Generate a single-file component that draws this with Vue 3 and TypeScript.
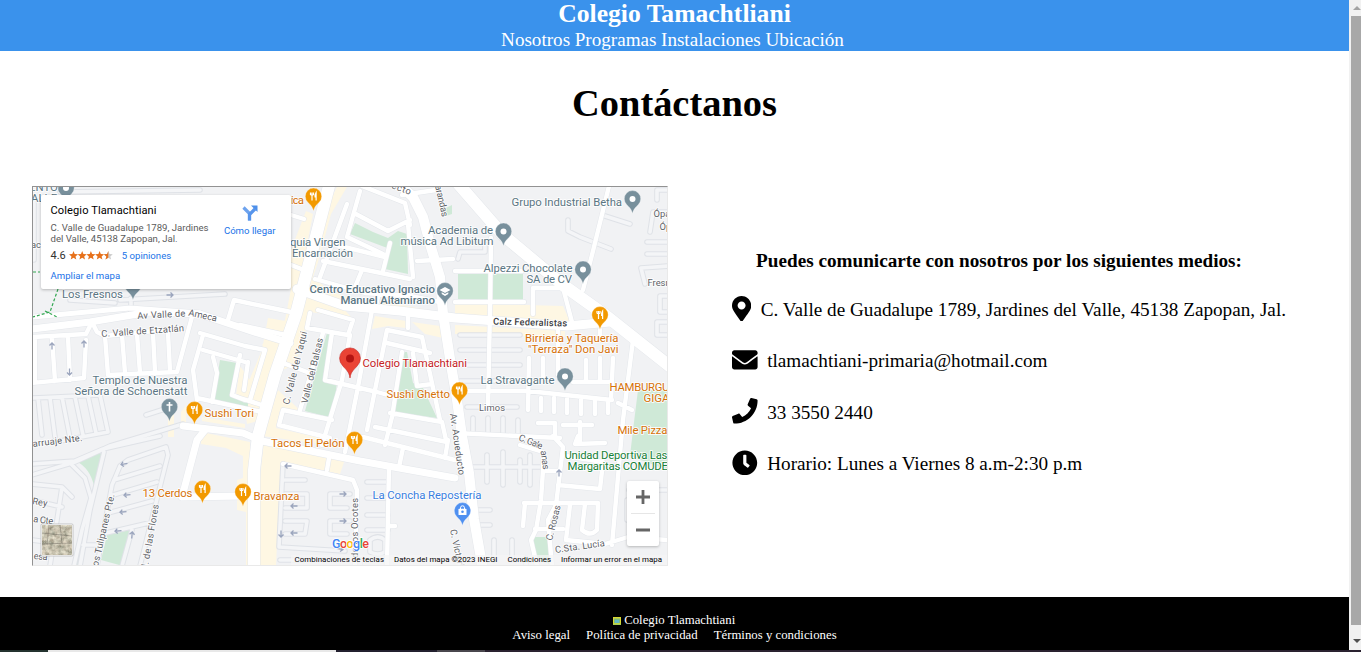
<script setup lang="ts">
interface Label {
  t: string
  x: number
  y: number
  w?: number
  c: string
  r?: number
}
interface Pin {
  x: number
  y: number
  k: 'food' | 'dot' | 'edu' | 'church' | 'shop'
}

const navLinks: string[] = ['Nosotros', 'Programas', 'Instalaciones', 'Ubicación']
const legalLinks: string[] = ['Aviso legal', 'Política de privacidad', 'Términos y condiciones']

const contacts = [
  {
    text: 'C. Valle de Guadalupe 1789, Jardines del Valle, 45138 Zapopan, Jal.',
    w: 384,
    d: 'M172.268 501.67C26.97 291.031 0 269.413 0 192 0 85.961 85.961 0 192 0s192 85.961 192 192c0 77.413-26.97 99.031-172.268 309.67-9.535 13.774-29.93 13.773-39.464 0zM192 272c44.183 0 80-35.817 80-80s-35.817-80-80-80-80 35.817-80 80 35.817 80 80 80z',
  },
  {
    text: 'tlamachtiani-primaria@hotmail.com',
    w: 512,
    d: 'M502.3 190.8c3.9-3.1 9.7-.2 9.7 4.7V400c0 26.5-21.5 48-48 48H48c-26.5 0-48-21.5-48-48V195.6c0-5 5.7-7.8 9.7-4.7 22.4 17.4 52.1 39.5 154.1 113.6 21.1 15.4 56.7 47.8 92.2 47.6 35.7.3 72-32.8 92.3-47.6 102-74.1 131.6-96.3 154-113.7zM256 320c23.2.4 56.6-29.2 73.4-41.4 132.7-96.3 142.8-104.7 173.4-128.7 5.8-4.5 9.2-11.5 9.2-18.9v-19c0-26.5-21.5-48-48-48H48c-26.5 0-48 21.5-48 48v19c0 7.4 3.4 14.3 9.2 18.9 30.6 23.9 40.7 32.4 173.4 128.7 16.8 12.2 50.2 41.8 73.4 41.4z',
  },
  {
    text: '33 3550 2440',
    w: 512,
    d: 'M493.4 24.6l-104-24c-11.3-2.6-22.9 3.3-27.5 13.9l-48 112c-4.2 9.8-1.4 21.3 6.9 28l60.6 49.6c-36 76.7-98.9 140.5-177.2 177.2l-49.6-60.6c-6.8-8.3-18.2-11.1-28-6.9l-112 48C3.9 366.5-2 378.1.6 389.4l24 104C27.1 504.2 36.7 512 48 512c256.1 0 464-207.5 464-464 0-11.2-7.7-20.9-18.6-23.4z',
  },
  {
    text: 'Horario: Lunes a Viernes 8 a.m-2:30 p.m',
    w: 512,
    d: 'M256,8C119,8,8,119,8,256S119,504,256,504,504,393,504,256,393,8,256,8Zm92.49,313h0l-20,25a16,16,0,0,1-22.49,2.5h0l-67-49.72a40,40,0,0,1-15-31.23V112a16,16,0,0,1,16-16h32a16,16,0,0,1,16,16V256l58,42.5A16,16,0,0,1,348.49,321Z',
  },
]

const beige: string[] = [
  'M306 211L313 214L300 280L292 312L284 360L262 345L285 320L291 289L291 250Z',
  'M337 187H347L331 214L318 262L313 277L330 291L355 300L362 307L300 288L318 225Z',
  'M303 296L343 308L352 318L310 312L306 330L295 365L280 371Z',
  'M268 318L291 322L280 360L262 420L247 424L243 395L262 350Z',
  'M264 440L345 459L340 474L283 462L278 520L276 566H260V480Z',
  'M201 432L250 442V566H246V512L237 510V480L243 478V456L226 448L201 444Z',
  'M278 390L302 412L280 410L276 428L330 440L328 445L262 436Z',
  'M455 303L563 306L570 322L455 314Z',
  'M455 325L565 331V337L455 334Z',
  'M370 302L440 316V312L375 300Z',
  'M375 316L406 321V328L388 326L372 329ZM412 322L440 326L443 338L425 334Z',
  'M168 411H174V437H168ZM181 412L186 405V424H181ZM202 417L245 424V428L202 421Z',
  'M240 366L250 380L244 398L236 395Z',
]

const greens: string[] = [
  'M220 360L237 363L232 393L243 398V408L213 403Z',
  'M327 333L330 335L323 378L337 383L332 418L305 411Z',
  'M403 352H407L413 383L423 388L437 418L392 412Z',
  'M355 223L373 232L388 238L398 231L407 234L408 274L385 269L390 249L350 234Z',
  'M458 274H523V301L458 299Z',
  'M638 390H668V470L630 456L633 430Z',
  'M533 537H547L552 566L536 556Z',
  'M76 461L104 450L94 486Q90 468 76 461Z',
  'M107 535L130 530L123 566L101 560Z',
  'M240 404L248 400V410H242Z',
  'M444 209L452 205V214L446 216Z',
  'M93 490L88 530L80 566H76L84 530Z',
]

/* Dead ends and private lanes, outlined in grey */
const lanes =
  'M32 475L75 462L110 446L150 434L183 424M32 464L75 461L103 449L160 436M70 463L85 478L91 498L82 530L74 566' +
  'M104 452L90 510L80 566M32 484L62 487L72 497M32 500L62 507M62 487L50 566M83 545H97M32 540L55 543' +
  'M120 466L128 460L166 447L168 455L140 566M120 466L112 485L97 566M114 480L160 466M110 496L157 482M108 513L152 501M106 533L153 522M132 530L122 566' +
  'M32 398L100 395L108 432L60 441M38 398L42 435M50 398L55 437M62 397L70 438M75 397L83 435M88 396L96 433' +
  'M146 415L168 408M605 216L630 224M568 220V231L580 237L611 249M458 259L460 252H485V244' +
  'M460 335H520M460 350H520M460 365H520M460 381H515M467 407H517M473 418V432M488 418V433M503 418V434M518 420V435' +
  'M470 467H540M487 455V482M503 452V485M520 460V482M530 455V485M474 510H490M474 525H490M494 540V560M512 540V560M526 558V566' +
  'M367 482H388M367 498H388M367 515H388M367 530H388M283 464L279 547L345 551M285 480H305M285 494H307V508H285M285 521H307L305 534H285M350 494H330V508H347M350 521H330V534H347' +
  'M370 540V552Q378 556 385 552V540Q378 534 370 540M120 300L225 294M131 298V312M70 300L115 303M34 200V260M60 192L200 190' +
  'M650 232L653 212H668M647 242H668M647 254H668M645 284L641 268L668 266M668 296H660V312H668M668 190H657V200M668 322H657V335H668M360 560V566M280 560H300' +
  'M629 490H668M627 520V500'

const streets =
  'M32 383L84 378L86 340M35 338V382M52 338L55 381M68 337L70 380M32 337L86 334L92 322L97 332L105 336L108 375L177 372L193 313' +
  'M122 335L125 373M137 334L140 373M153 333L155 372M168 333L170 371M105 336L182 328' +
  'M200 333L245 346L265 350L250 400M203 335L193 370L197 400M203 350L245 362M213 357L217 373L212 402M240 355L232 395L245 400M197 398L262 412' +
  'M240 325L290 336M240 398L265 406M248 362L244 390M228 320L234 300L291 312' +
  'M310 313L307 328L348 335L353 320L318 310M283 363L307 372M323 333L300 410M332 333L325 380L377 392L395 397' +
  'M350 335L342 380L322 445M372 310L358 387L345 452M387 330L367 430M387 330L422 337L440 420M387 343L430 353M413 353L417 386L432 384' +
  'M402 352L392 417L385 445M390 413L442 422L446 440M283 410L332 420M283 410L279 425L330 438M375 427L447 442M408 312V328' +
  'M362 186L405 203L410 225M360 191L347 237L383 254M354 213L388 231L410 220M390 243L383 271M408 224L413 277M347 204L320 277' +
  'M336 245L385 257M323 261L410 279M362 270L355 287M315 279L365 293L410 296L440 302M417 261L453 259M380 288L376 306M402 195L436 190' +
  'M491 238L490 314M490 310L488 407M455 271H522M455 302H524M533 290V314M533 288H563L572 322M609 186L593 251L583 290' +
  'M465 391H528L612 400M529 358L528 410M543 358V378M558 325V375M586 360V382M600 358V382M613 358L611 400M573 382H612' +
  'M541 398V411M554 398V412M567 399V413M581 400V414M595 400V414M608 400V413M633 340L623 420L612 545M618 403L632 410' +
  'M455 433L560 438M538 423H555V437M563 425H592M580 422V440M553 436L563 447L556 505L548 520M578 436L575 444L605 443' +
  'M520 445L543 452V470L541 500L536 530L531 540L537 566M558 485L600 489L603 462L566 456M543 471H560M524 503H598L597 530Q590 537 582 530L585 504' +
  'M525 503L523 526M570 505L566 540L605 544L628 537L668 540M535 529H563M548 520L552 566M389 467L387 566M389 526H395' +
  'M403 448L399 467M363 437L455 460M448 440L445 458M283 464L353 480L357 490L355 566M329 458L327 470M291 215L304 219M291 265L304 270M600 330V340'

const mainRoads = [
  { d: 'M329 186L296 314L275 375L258 436L254 470V566', w: 12 },
  { d: 'M455 180L503 235L563 285L605 315L672 368', w: 12 },
  { d: 'M395 180L413 197L423 217L430 244L440 277L443 314L451 365L457 400L462 436L469 473L474 519L483 570', w: 10 },
  { d: 'M297 289L345 306L400 311L455 318L567 326L610 322', w: 9 },
  { d: 'M32 329L90 322L150 312L200 314L248 330L290 343', w: 7 },
  { d: 'M32 317L130 308L200 313', w: 5 },
  { d: 'M183 426L243 433L262 441L360 461L455 478', w: 7 },
  { d: 'M205 430L197 440L182 497L245 496', w: 7 },
]

const arrows = [
  { x: 52, y: 346, r: -90 }, { x: 84, y: 344, r: -90 }, { x: 69.500, y: 372, r: 90 }, { x: 170, y: 295, r: 0 },
  { x: 124, y: 464, r: 170 }, { x: 127, y: 495, r: 175 }, { x: 123, y: 512, r: 175 }, { x: 118, y: 531, r: 175 }, { x: 132, y: 535, r: -85 },
  { x: 288, y: 466, r: 180 }, { x: 294, y: 506, r: 180 }, { x: 294, y: 533, r: 180 }, { x: 281, y: 534, r: 90 },
  { x: 343, y: 494, r: 0 }, { x: 343, y: 521, r: 0 }, { x: 340, y: 549, r: 10 }, { x: 559, y: 473, r: -90 },
]

const labels: Label[] = [
  { t: 'ENTO', x: 29, y: 191, c: 'poi' },
  { t: 'ALLE', x: 31, y: 202, c: 'poi' },
  { t: 'Grupo Industrial Betha', x: 511.5, y: 206, w: 110.500, c: 'poi' },
  { t: 'Academia de', x: 428, y: 234, w: 65, c: 'poi' },
  { t: 'música Ad Libitum', x: 400.5, y: 245, w: 93, c: 'poi' },
  { t: 'Alpezzi Chocolate', x: 483.5, y: 271.5, w: 89, c: 'poi' },
  { t: 'SA de CV', x: 526.5, y: 282.500, w: 45.500, c: 'poi' },
  { t: 'Centro Educativo Ignacio', x: 309.5, y: 293, w: 125.500, c: 'poi med' },
  { t: 'Manuel Altamirano', x: 340.5, y: 304, w: 94.500, c: 'poi med' },
  { t: 'quia Virgen', x: 290, y: 246, w: 55.500, c: 'poi' },
  { t: 'Encarnación', x: 292, y: 257, w: 61, c: 'poi' },
  { t: 'ica', x: 291, y: 204, w: 13, c: 'food' },
  { t: 'Los Fresnos', x: 62, y: 298, w: 61, c: 'poi' },
  { t: 'Birriería y Taquería', x: 525, y: 342, w: 93.500, c: 'food' },
  { t: '"Terraza" Don Javi', x: 528, y: 353, w: 90.500, c: 'food' },
  { t: 'La Stravagante', x: 480.5, y: 384, w: 74, c: 'poi' },
  { t: 'HAMBURGU', x: 609.5, y: 390.5, w: 60, c: 'food' },
  { t: 'GIGA', x: 643.5, y: 402, c: 'food' },
  { t: 'Mile Pizza', x: 617.500, y: 434, w: 50, c: 'food' },
  { t: 'Colegio Tlamachtiani', x: 362.5, y: 366.5, w: 104.500, c: 'place' },
  { t: 'Sushi Ghetto', x: 386.5, y: 398, w: 63.500, c: 'food' },
  { t: 'Tacos El Pelón', x: 271, y: 447, w: 73.500, c: 'food' },
  { t: 'Sushi Tori', x: 204.5, y: 417, w: 49.500, c: 'food' },
  { t: 'Templo de Nuestra', x: 92.5, y: 384, w: 95, c: 'poi' },
  { t: 'Señora de Schoenstatt', x: 74.5, y: 395, w: 113, c: 'poi' },
  { t: '13 Cerdos', x: 142.5, y: 496.5, w: 50, c: 'food' },
  { t: 'Bravanza', x: 253.5, y: 500, w: 46, c: 'food' },
  { t: 'La Concha Repostería', x: 372.5, y: 499, w: 109, c: 'shop' },
  { t: 'Unidad Deportiva Las', x: 564.5, y: 458.5, w: 103, c: 'park' },
  { t: 'Margaritas COMUDE', x: 567.500, y: 470, w: 100.500, c: 'park' },
  { t: 'Calz Federalistas', x: 493, y: 324.5, w: 74, c: 'road dark', r: 1.5 },
  { t: 'Limos', x: 479, y: 411, w: 26, c: 'road' },
  { t: 'Av Valle de', x: 137.500, y: 319, w: 48, c: 'road', r: -3 },
  { t: 'Ameca', x: 188, y: 315.500, w: 29, c: 'road', r: 12 },
  { t: 'C. Valle de Etzatlán', x: 101.5, y: 337, w: 83, c: 'road', r: -4 },
  { t: 'C. Valle del Yaqui', x: 289, y: 405, w: 75, c: 'road', r: -76 },
  { t: 'Valle del Balsas', x: 307.5, y: 404, w: 67, c: 'road', r: -76.500 },
  { t: 'Av. Acueducto', x: 450, y: 414, w: 62, c: 'road', r: 82 },
  { t: 'C. Gale', x: 518, y: 440, w: 25, c: 'road', r: 22 },
  { t: 'anas', x: 540.500, y: 451, w: 19, c: 'road', r: 82 },
  { t: 'C. Rosas', x: 552, y: 541, w: 36, c: 'road', r: -76 },
  { t: 'C.Sta. Lucía', x: 555.5, y: 553, w: 50, c: 'road', r: -8 },
  { t: 'C. Victoria', x: 450, y: 530, c: 'road', r: 78 },
  { t: 'los Tulipanes Pte.', x: 97.5, y: 569, w: 76, c: 'road', r: -77 },
  { t: 'l. de las Flores', x: 148, y: 567, w: 63, c: 'road', r: -80 },
  { t: 'de los Ocotes', x: 358, y: 558, w: 60, c: 'road', r: -90 },
  { t: 'arruaje Nte.', x: 33, y: 447, w: 50, c: 'road', r: -7 },
  { t: 'Rey', x: 32, y: 504, w: 15, c: 'road', r: 10 },
  { t: 'a Ote.', x: 33, y: 522, w: 22, c: 'road', r: 7 },
  { t: 'esa', x: 33.500, y: 559, w: 14, c: 'road', r: 5 },
  { t: 'ac', x: 31, y: 248, c: 'road' },
  { t: 'ecto', x: 391, y: 188, w: 20, c: 'road', r: 20 },
  { t: 'arandas', x: 435, y: 186, w: 32, c: 'road', r: 77 },
  { t: 'Ópalo', x: 653.5, y: 217, c: 'road' },
  { t: 'Óp', x: 659.5, y: 230, c: 'road' },
  { t: 'Fresno', x: 647.5, y: 286, c: 'road' },
]

const pins: Pin[] = [
  { x: 66, y: 188, k: 'dot' }, { x: 133, y: 285.5, k: 'dot' },
  { x: 632.5, y: 199, k: 'dot' }, { x: 503.5, y: 231.5, k: 'dot' }, { x: 583, y: 269.500, k: 'dot' },
  { x: 445, y: 291, k: 'edu' }, { x: 565, y: 376.5, k: 'dot' }, { x: 169.5, y: 407, k: 'church' },
  { x: 313.5, y: 196.5, k: 'food' }, { x: 600, y: 315, k: 'food' }, { x: 459.5, y: 390.5, k: 'food' },
  { x: 194.5, y: 410, k: 'food' }, { x: 354.5, y: 440, k: 'food' }, { x: 202.5, y: 489, k: 'food' },
  { x: 243, y: 492, k: 'food' }, { x: 462.5, y: 511, k: 'shop' },
]
const pinFill: Record<Pin['k'], string> = {
  food: '#f29900', dot: '#78909c', edu: '#78909c', church: '#78909c', shop: '#4f90f0',
}

const star = 'M4.500 0L5.700 3.100L9 3.300L6.500 5.400L7.300 8.600L4.500 6.800L1.700 8.600L2.500 5.400L0 3.300L3.300 3.100Z'
</script>

<template>
  <div class="window">
    <div class="viewport">
      <div class="page">
        <header class="top">
          <h2 class="brand">Colegio Tamachtliani</h2>
          <nav class="nav"><a v-for="l in navLinks" :key="l">{{ l }}</a></nav>
        </header>

        <main class="main">
          <h1 class="title">Contáctanos</h1>
          <div class="columns">
            <div class="map">
              <svg class="canvas" viewBox="33 187 634 378" width="634" height="378">
                <defs>
                  <filter id="ground" x="0" y="0" width="1" height="1">
                    <feTurbulence type="fractalNoise" baseFrequency="0.22" numOctaves="4" seed="8" />
                    <feColorMatrix values="0.8 0 0 0 0.16  0.75 0.1 0 0 0.1  0.65 0.1 0 0 0.04  0 0 0 0 1" />
                  </filter>
                </defs>
                <rect x="32" y="186" width="636" height="380" fill="#f1f2f4" />
                <path v-for="d in beige" :key="d" :d="d" fill="#fef7e3" />
                <path v-for="d in greens" :key="d" :d="d" fill="#cfe9d7" />
                <path class="line" :d="lanes" stroke="#dfe2e7" stroke-width="5.600" />
                <path class="line" :d="lanes" stroke="#f4f5f7" stroke-width="3.600" />
                <path class="line" :d="streets" stroke="#e4e7eb" stroke-width="5.400" />
                <path v-for="m in mainRoads" :key="'e' + m.d" class="line" :d="m.d" stroke="#e4e7eb" :stroke-width="m.w + 1" />
                <path class="line" :d="streets" stroke="#fff" stroke-width="4.400" />
                <path v-for="m in mainRoads" :key="m.d" class="line" :d="m.d" stroke="#fff" :stroke-width="m.w" />
                <path d="M33 272H40M58 289L50 312L33 317M45 311L57 317" fill="none" stroke="#34a853" stroke-width="1.200" stroke-dasharray="3 2" />
                <g fill="none" stroke="#9ba5bd" stroke-width="1.300">
                  <path v-for="(a, i) in arrows" :key="i" d="M-3.500 0H3M0.500 -2.500L3 0L0.500 2.500" :transform="`translate(${a.x} ${a.y}) rotate(${a.r})`" />
                </g>
                <g v-for="(p, i) in pins" :key="'p' + i" :transform="`translate(${p.x} ${p.y})`">
                  <path d="M0 14.500C-1 10 -3 8.500 -5.700 5.700A8.200 8.200 0 1 1 5.700 5.700C3 8.500 1 10 0 14.500Z" :fill="pinFill[p.k]" stroke="#fff" stroke-opacity=".5" stroke-width=".6" />
                  <path v-if="p.k === 'food'" d="M-3 -4V-1.500M-1.500 -4V4M0 -4V-1.500M-3 -1.500H0M2.600 4V-4Q1.300 -2 1.600 .5H2.600" fill="none" stroke="#fff" stroke-width="1.200" />
                  <circle v-else-if="p.k === 'dot'" r="3" fill="#fff" />
                  <path v-else-if="p.k === 'church'" d="M0 -5V4.500M-3 -2H3" fill="none" stroke="#fff" stroke-width="1.600" />
                  <path v-else-if="p.k === 'edu'" d="M0 -4L5.500 -1L0 2L-5.500 -1ZM-3.300 1.200L0 3L3.300 1.200V3L0 5L-3.300 3Z" fill="#fff" />
                  <g v-else>
                    <rect x="-4" y="-2.200" width="8" height="6.200" rx=".6" fill="#fff" />
                    <path d="M-2 -2V-3.200A2 2 0 0 1 2 -3.200V-2" fill="none" stroke="#fff" />
                    <circle cy=".8" r="1.300" fill="#4f90f0" />
                  </g>
                </g>
                <path d="M350 378C349 371 346 370 342.500 365.500A10.400 10.400 0 1 1 357.500 365.500C354 370 351 371 350 378Z" fill="#ea4335" stroke="#c5221f" stroke-width=".6" />
                <circle cx="350" cy="358.500" r="4" fill="#b31412" />
                <text
                  v-for="(l, i) in labels"
                  :key="'l' + i"
                  :class="['label', l.c]"
                  :x="l.x"
                  :y="l.y"
                  :textLength="l.w"
                  :transform="l.r ? `rotate(${l.r} ${l.x} ${l.y})` : undefined"
                >{{ l.t }}</text>

                <rect x="291" y="555" width="376" height="10" fill="#f5f5f5" fill-opacity=".7" />
                <g class="credits">
                  <text x="294.500" y="562" textLength="89.500">Combinaciones de teclas</text>
                  <text x="394" y="562" textLength="103.500">Datos del mapa ©2023 INEGI</text>
                  <text x="507.500" y="562" textLength="43.500">Condiciones</text>
                  <text x="561" y="562" textLength="101">Informar un error en el mapa</text>
                </g>
                <text class="google" x="332" y="548" textLength="37"><tspan fill="#4285f4">G</tspan><tspan fill="#ea4335">o</tspan><tspan fill="#fbbc04">o</tspan><tspan fill="#4285f4">g</tspan><tspan fill="#34a853">l</tspan><tspan fill="#ea4335">e</tspan></text>
                <rect x="41" y="524" width="32" height="32" rx="1" fill="#fff" stroke="#999" stroke-opacity=".5" />
                <rect x="42" y="525" width="30" height="30" filter="url(#ground)" />
                <path d="M42 533L72 536M49 525L47 545M60 525L62 543M42 544L72 543" stroke="#5e5b52" stroke-opacity=".4" />
              </svg>

              <div class="card">
                <div class="info">
                  <div class="name">Colegio Tlamachtiani</div>
                  <div class="addr">C. Valle de Guadalupe 1789, Jardines<br>del Valle, 45138 Zapopan, Jal.</div>
                  <div class="rating">
                    <span class="score">4.6</span>
                    <svg width="44" height="9" viewBox="0 0 44 9">
                      <path v-for="n in 4" :key="n" :d="star" :transform="`translate(${(n - 1) * 8.700} 0)`" fill="#e7711b" />
                      <path :d="star" transform="translate(34.800 0)" fill="#ccc" />
                      <path d="M4.500 0V6.800L1.700 8.600L2.500 5.400L0 3.300L3.300 3.100Z" transform="translate(34.800 0)" fill="#e7711b" />
                    </svg>
                    <a class="reviews">5 opiniones</a>
                  </div>
                  <a class="bigger">Ampliar el mapa</a>
                </div>
                <div class="directions">
                  <svg width="16" height="16" viewBox="0 0 16 16">
                    <path d="M1.500 2.500L7.500 8.500V15.500" fill="none" stroke="#6ea3ee" stroke-width="3.200" />
                    <path d="M7.500 15.500V9.500L13 4" fill="none" stroke="#5795ec" stroke-width="3.200" />
                    <path d="M9 .5H15.500V7Z" fill="#4d8fea" />
                  </svg>
                  <a>Cómo llegar</a>
                </div>
              </div>

              <div class="zoom">
                <svg width="32" height="65" viewBox="0 0 32 65">
                  <path d="M9 16H23M16 9V23M9 49H23" stroke="#666" stroke-width="2.800" />
                  <path d="M4 32.500H28" stroke="#e6e6e6" />
                </svg>
              </div>
            </div>

            <section class="contact">
              <h3 class="lead">Puedes comunicarte con nosotros por los siguientes medios:</h3>
              <div v-for="c in contacts" :key="c.text" class="row">
                <svg :width="c.w / 20" height="25.600" :viewBox="`0 0 ${c.w} 512`"><path :d="c.d" /></svg>
                <span>{{ c.text }}</span>
              </div>
            </section>
          </div>
        </main>

        <footer class="foot">
          <div class="owner">
            <svg width="8" height="8" viewBox="0 0 8 8">
              <rect width="8" height="8" fill="#d8d832" />
              <rect x="1" y="1.500" width="6" height="4.500" fill="#7db87c" />
              <rect x="2" y="3" width="4" height="3" fill="#62b7c5" />
              <rect y="6.500" width="8" height="1.500" fill="#a9cf52" />
            </svg>
            <span>Colegio Tlamachtiani</span>
          </div>
          <div class="legal"><a v-for="l in legalLinks" :key="l">{{ l }}</a></div>
        </footer>
      </div>
      <div class="scrollbar">
        <i class="arrow up"></i>
        <div class="thumb"></div>
        <i class="arrow down"></i>
      </div>
    </div>
    <div class="taskbar"><i class="t1"></i><i class="t2"></i><i class="t3"></i><i class="t4"></i></div>
  </div>
</template>

<style>
body {
  margin: 0;
  overflow: hidden;
}
</style>

<style scoped>
.window {
  width: 1361px;
  height: 652px;
  display: flex;
  flex-direction: column;
  background: #fff;
  color: #000;
  font-family: 'Liberation Serif', 'Times New Roman', serif;
  overflow: hidden;
}
.viewport {
  display: flex;
  height: 650px;
}
.page {
  width: 1349px;
  display: flex;
  flex-direction: column;
}
.top {
  height: 51px;
  background: #3a92ec;
  color: #fff;
  text-align: center;
}
.brand {
  margin: 0;
  font-size: 25.6px;
  line-height: 28px;
}
.nav {
  display: flex;
  justify-content: center;
  gap: 4.6px;
  padding-right: 4px;
  font-size: 19.12px;
  line-height: 24px;
}
.main {
  height: 546px;
}
.title {
  margin: 0;
  padding-top: 30px;
  font-size: 38.4px;
  line-height: 44px;
  text-align: center;
}
.columns {
  display: flex;
  padding: 61px 0 0 32px;
}
.map {
  position: relative;
  box-sizing: border-box;
  width: 636px;
  height: 380px;
  border: 1px solid;
  border-color: #929292 #e9e9e9 #e9e9e9 #929292;
  overflow: hidden;
  font-family: Roboto, 'Liberation Sans', sans-serif;
}
.canvas {
  display: block;
}
.line {
  fill: none;
  stroke-linecap: round;
  stroke-linejoin: round;
}
.label {
  font-size: 11.4px;
  paint-order: stroke;
  stroke: #fff;
  stroke-opacity: .85;
  stroke-width: 1.8px;
  stroke-linejoin: round;
}
.poi { fill: #5b7683; }
.med { font-weight: 500; }
.food { fill: #d6720a; }
.place { fill: #c5221f; }
.shop { fill: #3a7fe0; }
.park { fill: #188038; }
.road {
  fill: #5f6368;
  font-size: 9.4px;
}
.dark {
  fill: #3c4043;
  font-weight: 500;
}
.credits {
  font-size: 7.9px;
  fill: #000;
}
.google {
  font-size: 12.5px;
  font-weight: 500;
  paint-order: stroke;
  stroke: #fff;
  stroke-width: 1.5px;
}
.card {
  position: absolute;
  left: 8px;
  top: 8px;
  width: 250px;
  height: 94px;
  box-sizing: border-box;
  display: flex;
  justify-content: space-between;
  padding: 9px 15.5px 0 9.5px;
  background: #fff;
  border-radius: 2px;
  box-shadow: 0 1px 3px rgba(0, 0, 0, .25);
}
.name {
  font-size: 11.1px;
  line-height: 14px;
  letter-spacing: .1px;
}
.addr {
  margin-top: 4px;
  font-size: 9.6px;
  line-height: 11px;
  color: #5b5b5b;
  white-space: nowrap;
}
.rating {
  display: flex;
  align-items: center;
  gap: 3px;
  margin-top: 5px;
  height: 13px;
  font-size: 9.6px;
}
.score {
  font-size: 11px;
  color: #333;
}
.reviews {
  margin-left: 6px;
}
.card a {
  color: #1a73e8;
  font-size: 9.6px;
}
.bigger {
  display: block;
  margin-top: 7px;
  line-height: 13px;
}
.directions {
  display: flex;
  flex-direction: column;
  align-items: center;
  padding-top: 1px;
}
.directions a {
  line-height: 12px;
  margin-top: 4px;
  white-space: nowrap;
}
.zoom {
  position: absolute;
  left: 594px;
  top: 294px;
  width: 32px;
  height: 65px;
  background: #fff;
  border-radius: 2px;
  box-shadow: 0 1px 3px rgba(0, 0, 0, .25);
}
.contact {
  padding: 64px 0 0 64px;
  width: 534px;
  font-size: 19.2px;
}
.lead {
  margin: 0 0 23.6px;
  font-size: 19.2px;
  line-height: 22px;
  text-align: center;
}
.row {
  display: flex;
  align-items: center;
  gap: 9.6px;
  height: 25.6px;
  margin-bottom: 25.8px;
  white-space: nowrap;
}
.row svg {
  flex-shrink: 0;
}
.row span {
  padding-top: 3px;
}
.foot {
  flex: 1;
  background: #000;
  color: #fff;
  font-size: 12.8px;
  line-height: 15px;
  padding-top: 16px;
  box-sizing: border-box;
}
.owner {
  display: flex;
  justify-content: center;
  align-items: center;
  gap: 3.4px;
  padding-right: 1px;
}
.legal {
  display: flex;
  justify-content: center;
  gap: 16px;
}
.scrollbar {
  width: 12px;
  display: flex;
  flex-direction: column;
  align-items: center;
  background: #f1f1f1;
}
.arrow {
  width: 0;
  height: 0;
  margin-left: 4px;
  border-left: 4px solid transparent;
  border-right: 4px solid transparent;
}
.up {
  margin-top: 6px;
  border-bottom: 4px solid #a3a3a3;
}
.thumb {
  align-self: flex-end;
  width: 10px;
  height: 609px;
  margin-top: 6px;
  background: #a8a8a8;
}
.down {
  margin-top: 14px;
  border-top: 4px solid #505050;
}
.taskbar {
  height: 2px;
  display: flex;
  background: #2a2230;
}
.t1 { width: 48px; background: #24332f; }
.t2 { width: 288px; background: #e8e8e8; }
.t3 { width: 101px; background: #23202f; }
.t4 { width: 48px; background: #4a474e; }
</style>
